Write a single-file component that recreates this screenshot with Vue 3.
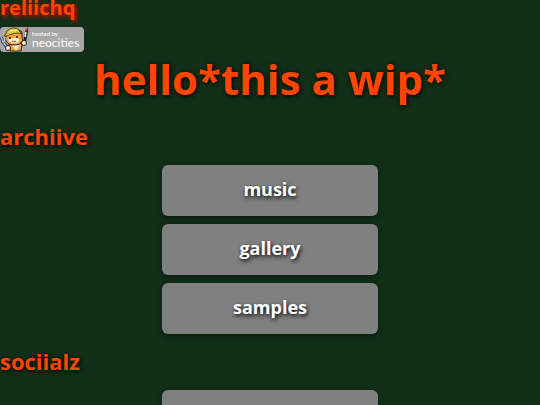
<template>
  <div class="page">
    <header>
      <p class="site-name">reliichq</p>
      <a class="host" href="#neocities">
        <svg class="cat" viewBox="0 0 30 25" aria-hidden="true">
          <path d="M9 17 C10 14 20 14 22 18 L21 24 H10Z" fill="#f5a23c" stroke="#2b2118" />
          <path d="M12 18 L16 24 L20 18Z" fill="#fff0d8" />
          <path d="M6 9 L7 4 L11 4 L19 3 L22 5 L22 10 C24 15 20 18 14 18 C8 18 4 14 6 9Z" fill="#f5a23c" stroke="#2b2118" />
          <path d="M8 13 C9 11 12 12 14 11 C17 10 20 12 19 14 C18 17 10 17 8 13Z" fill="#fff0d8" />
          <path d="M6 7 C7 0 18 -1 20 5 L22 7 C17 5 11 7 7 9 L4 9Z" fill="#e9c63b" stroke="#5a4515" />
          <path d="M10 4 L17 3" stroke="#fff3a0" />
          <path d="M10 10v2M17 9v2" stroke="#222" stroke-width="1.6" />
          <path d="M12 14 Q14 16 16 14" fill="none" stroke="#8b4522" />
          <path d="M1 10 L3 15 L9 23" fill="none" stroke="#26333c" stroke-width="3" />
          <path d="M1 10 L3 15 L9 23M5 10 L4 15" fill="none" stroke="#b8cbd5" stroke-width="1.3" />
          <path d="M24 17 L27 3" stroke="#222" stroke-width="3" />
          <path d="M25 10 L26 5" stroke="#eee" stroke-width="1.5" />
          <path d="M26 4 L28 1" stroke="#b63134" stroke-width="2" />
          <circle cx="24" cy="16" r="2.5" fill="#fff0d8" stroke="#2b2118" />
          <circle cx="8" cy="21" r="2.5" fill="#fff0d8" stroke="#2b2118" />
        </svg>
        <span class="host-text">
          <small>hosted by</small>
          <strong>neocities</strong>
        </span>
      </a>
    </header>

    <h1>hello*this a wip*</h1>

    <section v-for="section in sections" :key="section.title">
      <h2>{{ section.title }}</h2>
      <nav :aria-label="section.title">
        <a v-for="link in section.links" :key="link" :href="'#' + link">{{ link }}</a>
        <a v-if="!section.links.length" href="#sociialz" aria-label="sociialz"></a>
      </nav>
    </section>
  </div>
</template>

<script setup>
const sections = [
  { title: 'archiive', links: ['music', 'gallery', 'samples'] },
  { title: 'sociialz', links: [] },
]
</script>

<style>
body {
  background: #112e17;
  overflow: hidden;
}
</style>

<style scoped>
.page {
  height: 100vh;
  overflow: hidden;
  color: #ff4500;
  font-family: "Permanent Marker", "Open Sans", sans-serif;
  font-weight: 700;
  text-shadow: 1px 1px 4px #000;
}
.site-name {
  margin: 0 0 11px;
  font-size: 20px;
  line-height: 16px;
  text-shadow: 2px 2px 4px #f00;
}
.host {
  display: flex;
  width: 84px;
  height: 25px;
  border-radius: 4px;
  background: #a7a7a7;
  color: #fff;
  text-decoration: none;
  text-shadow: none;
}
.cat {
  width: 30px;
  height: 25px;
}
.host-text {
  display: flex;
  flex-direction: column;
  padding: 3px 0 0 2px;
}
.host small {
  font-family: Lato, sans-serif;
  font-size: 6px;
  line-height: 8px;
  font-weight: 400;
}
.host strong {
  font-family: Lato, sans-serif;
  font-size: 12px;
  line-height: 10px;
  font-weight: 400;
}
h1 {
  margin: 0;
  padding-bottom: 16px;
  font-size: 42px;
  line-height: 54px;
  text-align: center;
}
h2 {
  margin: 0;
  font-size: 22px;
  line-height: 28px;
}
nav {
  display: flex;
  flex-direction: column;
  align-items: center;
  gap: 8px;
  padding: 15px 0 13px;
}
nav a {
  display: flex;
  align-items: center;
  justify-content: center;
  box-sizing: border-box;
  width: 40%;
  height: 51px;
  padding-bottom: 4px;
  border-radius: 6px;
  background: #808080;
  box-shadow: 0 2px 5px rgba(0, 0, 0, 0.4);
  color: #fff;
  font-size: 18px;
  text-decoration: none;
  text-shadow: 1px 2px 4px #000;
}
</style>
